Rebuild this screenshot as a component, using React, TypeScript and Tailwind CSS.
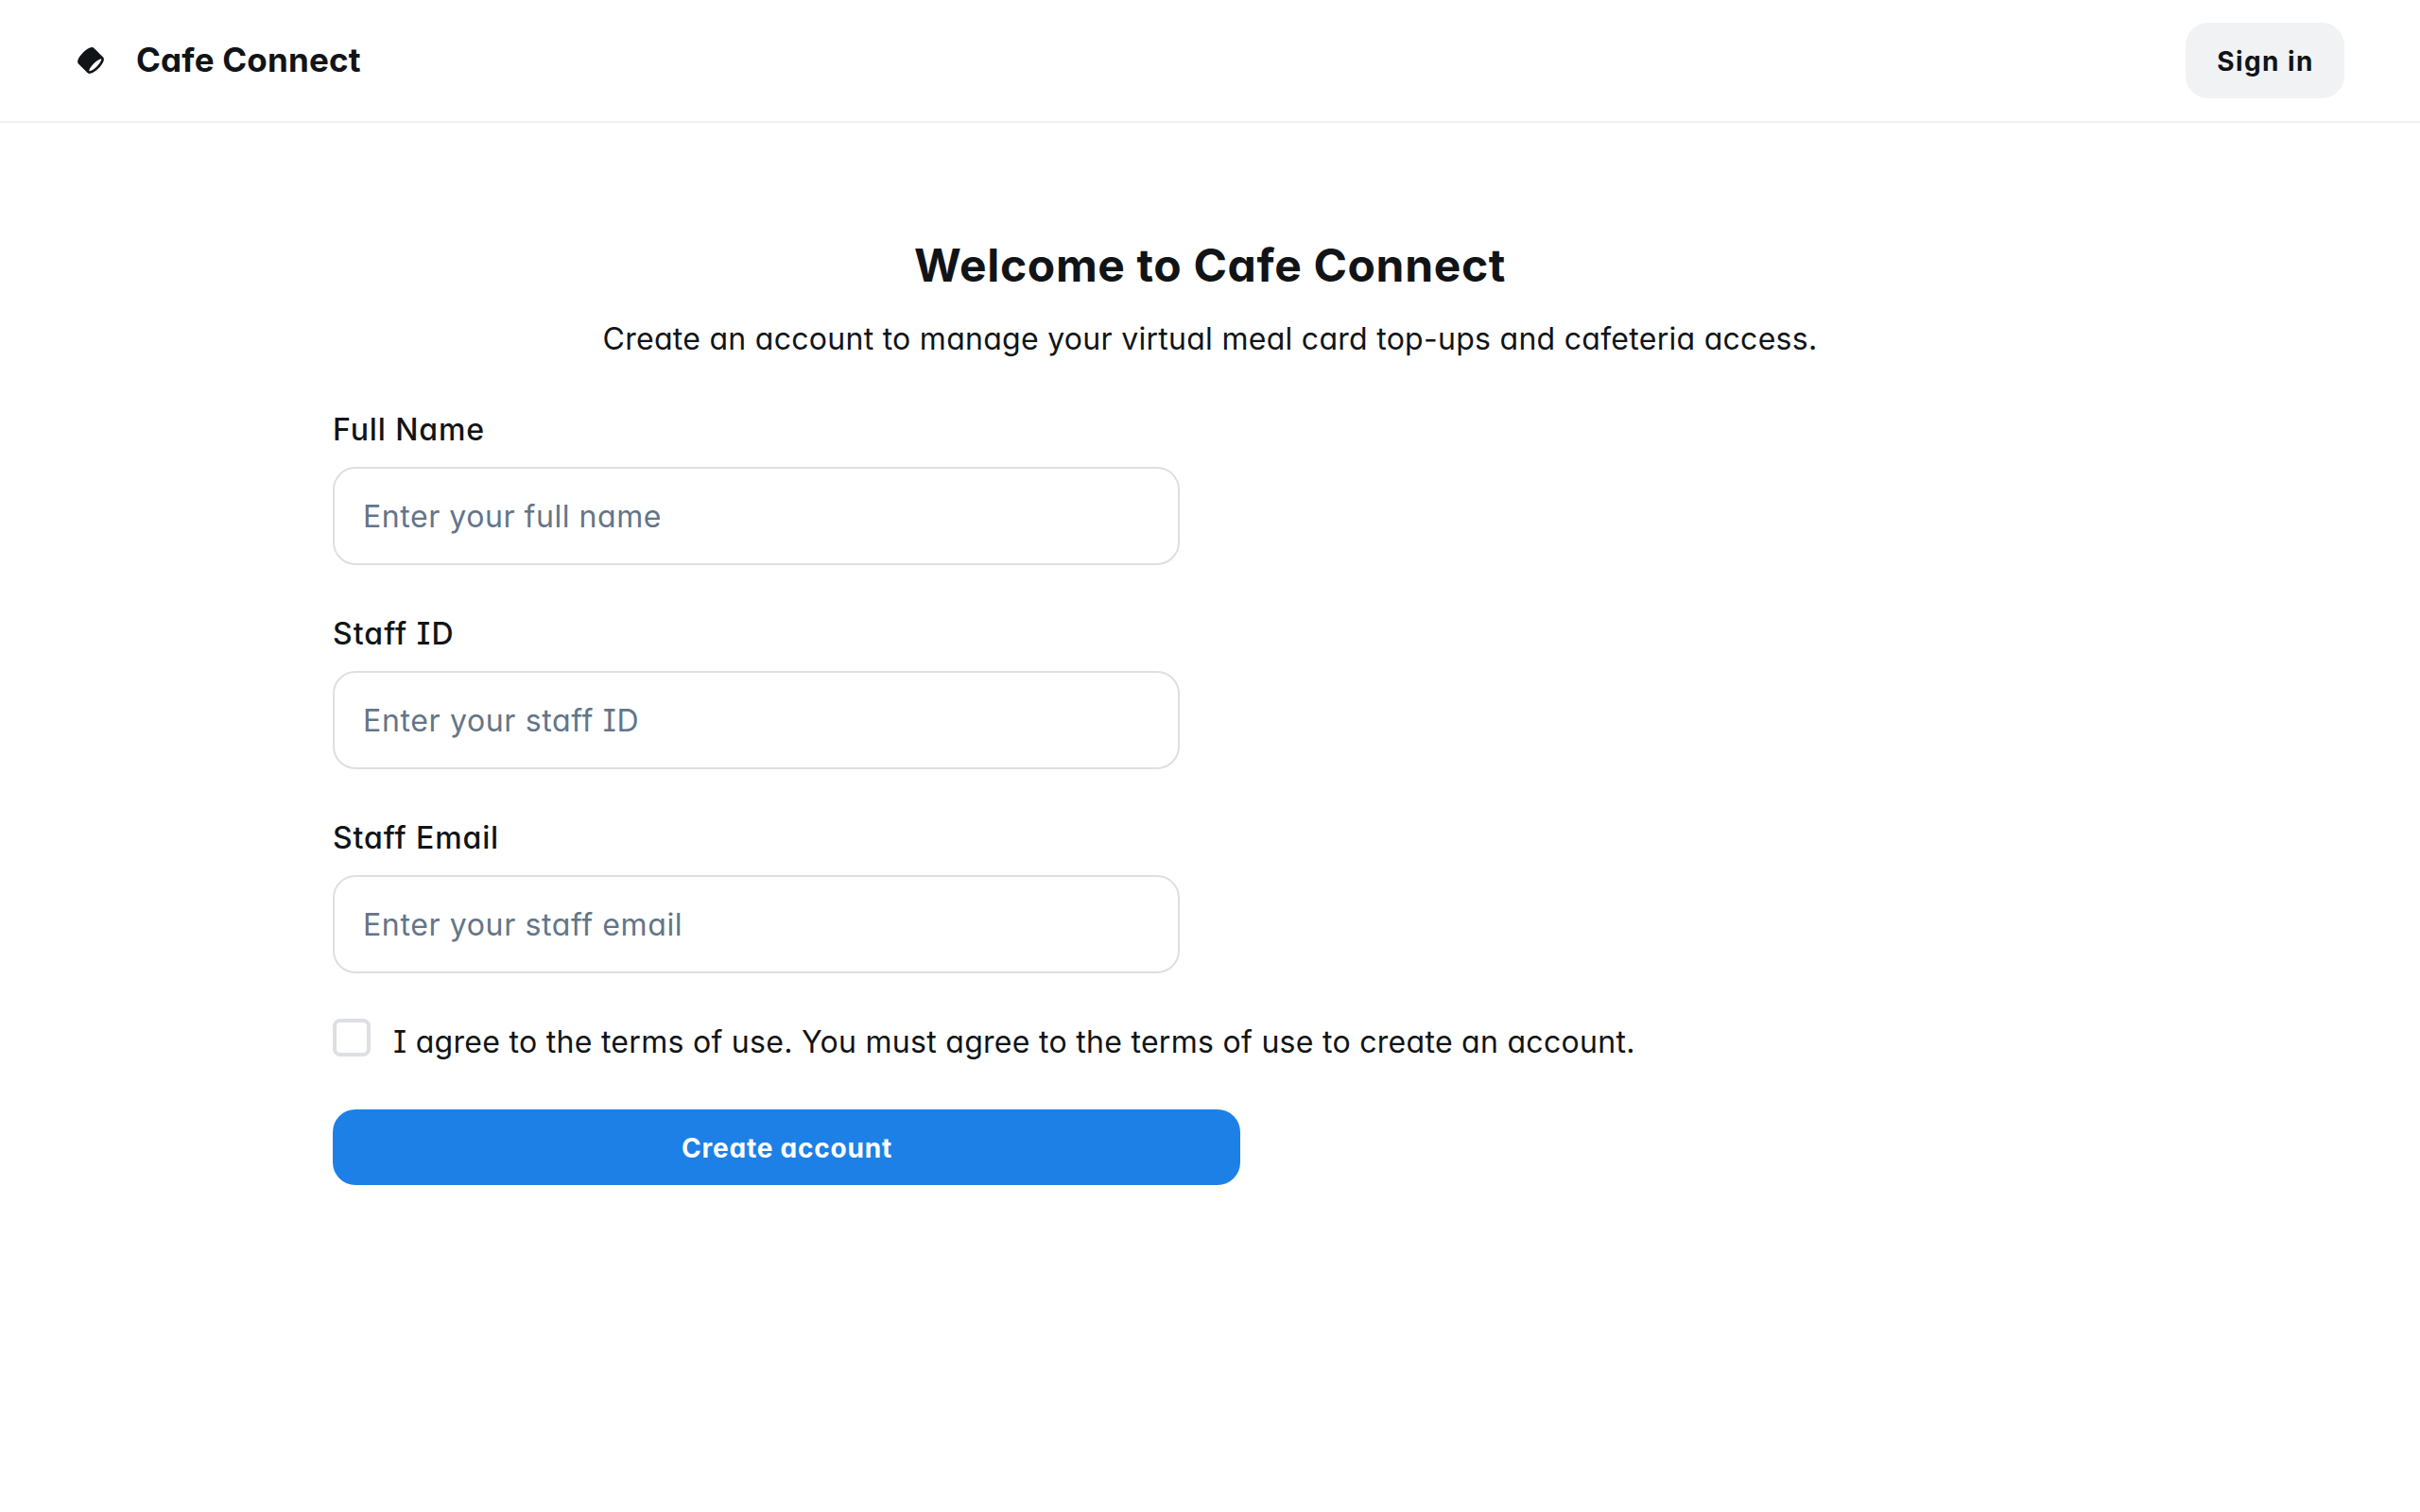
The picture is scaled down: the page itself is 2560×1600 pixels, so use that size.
const fields = [
  { id: "full-name", label: "Full Name", placeholder: "Enter your full name", type: "text", tracking: "placeholder:tracking-[0.55px]", labelTracking: "tracking-[0.9px]" },
  { id: "staff-id", label: "Staff ID", placeholder: "Enter your staff ID", type: "text", tracking: "placeholder:tracking-[0.65px]", labelTracking: "tracking-[1.05px]" },
  { id: "staff-email", label: "Staff Email", placeholder: "Enter your staff email", type: "email", tracking: "placeholder:tracking-[0.63px]", labelTracking: "tracking-[0.9px]" },
];

function Logo() {
  return (
    <svg viewBox="0 0 48 48" fill="none" className="size-8" aria-hidden="true">
      <path
        fillRule="evenodd"
        clipRule="evenodd"
        fill="currentColor"
        d="M39.475 21.6262C40.358 21.4363 40.6863 21.5589 40.7581 21.5934C40.7876 21.655 40.8547 21.857 40.8082 22.3336C40.7408 23.0255 40.4502 24.0046 39.8572 25.2301C38.6799 27.6631 36.5085 30.6631 33.5858 33.5858C30.6631 36.5085 27.6632 38.6799 25.2301 39.8572C24.0046 40.4502 23.0255 40.7407 22.3336 40.8082C21.8571 40.8547 21.6551 40.7875 21.5934 40.7581C21.5589 40.6863 21.4363 40.358 21.6262 39.475C21.8562 38.4054 22.4689 36.9657 23.5038 35.2817C24.7575 33.2417 26.5497 30.9744 28.7621 28.762C30.9744 26.5497 33.2417 24.7574 35.2817 23.5037C36.9657 22.4689 38.4054 21.8562 39.475 21.6262ZM4.41189 29.2403L18.7597 43.5881C19.8813 44.7097 21.4027 44.9179 22.7217 44.7893C24.0585 44.659 25.5148 44.1631 26.9723 43.4579C29.9052 42.0387 33.2618 39.5667 36.4142 36.4142C39.5667 33.2618 42.0387 29.9052 43.4579 26.9723C44.1631 25.5148 44.659 24.0585 44.7893 22.7217C44.9179 21.4027 44.7097 19.8813 43.5881 18.7597L29.2403 4.41187C27.8527 3.02428 25.8765 3.02573 24.2861 3.36776C22.6081 3.72863 20.7334 4.58419 18.8396 5.74801C16.4978 7.18716 13.9881 9.18353 11.5858 11.5858C9.18354 13.988 7.18717 16.4978 5.74802 18.8396C4.58421 20.7334 3.72865 22.6081 3.36778 24.2861C3.02574 25.8765 3.02429 27.8527 4.41189 29.2403Z"
      />
    </svg>
  );
}

export default function App() {
  return (
    <div className="flex min-h-screen flex-col bg-white font-['Inter',sans-serif] text-[#111417] [font-feature-settings:'cv11','cv08']">
      <header className="flex h-[130px] items-center justify-between border-b-2 border-[#f0f0f1] px-20">
        <div className="flex items-center gap-8">
          <Logo />
          <h2 className="pb-0.5 text-[35px] leading-[46px] font-bold tracking-[0.2px]">Cafe Connect</h2>
        </div>
        <button className="h-20 w-[168px] rounded-3xl bg-[#f0f2f4] pt-px pl-px text-[28px] font-bold tracking-[1.4px]">Sign in</button>
      </header>

      <main className="flex flex-col px-[352px]">
        <h1 className="mt-[121px] text-center text-[48px] leading-[60px] font-bold tracking-[0.64px]">Welcome to Cafe Connect</h1>
        <p className="mt-[24px] text-center text-[32px] leading-[48px] tracking-[0.28px]">
          Create an account to manage your virtual meal card top-ups and cafeteria access.
        </p>

        <form className="mt-12 flex flex-col" onSubmit={(e) => e.preventDefault()}>
          <div className="flex w-[896px] flex-col gap-[49px]">
            {fields.map((f) => (
              <div key={f.id} className="flex flex-col gap-[15px]">
                <label htmlFor={f.id} className={`text-[32px] leading-[48px] font-medium ${f.labelTracking}`}>
                  {f.label}
                </label>
                <input
                  id={f.id}
                  type={f.type}
                  placeholder={f.placeholder}
                  className={`h-[104px] rounded-3xl border-2 border-[#dddfe1] bg-white px-[30px] text-[32px] outline-none placeholder:text-[#637588] ${f.tracking}`}
                />
              </div>
            ))}
          </div>

          <div className="mt-12 flex items-start gap-6">
            <input id="terms" type="checkbox" className="size-10 shrink-0 appearance-none rounded-lg border-4 border-[#dddfe3] bg-transparent" />
            <label htmlFor="terms" className="mt-px text-[32px] leading-[48px] tracking-[0.29px]">
              I agree to the terms of use. You must agree to the terms of use to create an account.
            </label>
          </div>

          <button type="submit" className="mt-[47px] h-20 w-[960px] rounded-3xl bg-[#1c80e6] pt-px pl-px text-[28px] font-bold tracking-[0.78px] text-white">
            Create account
          </button>
        </form>
      </main>
    </div>
  );
}
